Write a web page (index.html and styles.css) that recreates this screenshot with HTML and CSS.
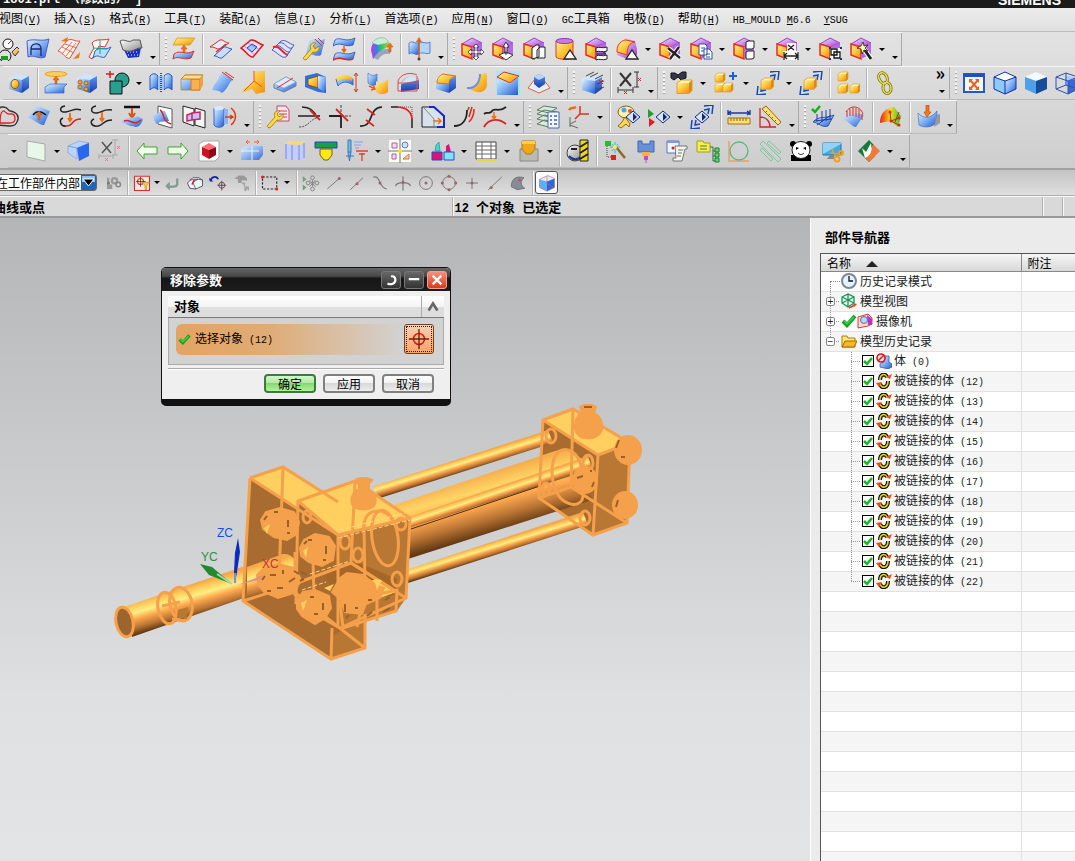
FILE: index.html
```html
<!DOCTYPE html>
<html lang="zh-CN">
<head>
    <meta charset="UTF-8">
    <meta name="viewport" content="width=device-width, initial-scale=1.0">
    <title>移除参数</title>
    <link rel="stylesheet" href="styles.css">
</head>
<body>
    <svg class="sprite" aria-hidden="true">
        <defs>
            <linearGradient id="blue" x1="0" y1="0" x2="1" y2="1"><stop offset="0" stop-color="#e4f1ff"/><stop offset=".5" stop-color="#7fb0f4"/><stop offset="1" stop-color="#2458cc"/></linearGradient>
            <linearGradient id="deep" x1="0" y1="0" x2="0" y2="1"><stop offset="0" stop-color="#5d92ee"/><stop offset="1" stop-color="#173fa8"/></linearGradient>
            <linearGradient id="gold" x1="0" y1="0" x2="1" y2="1"><stop offset="0" stop-color="#fff3a0"/><stop offset=".5" stop-color="#fdc53a"/><stop offset="1" stop-color="#f08a10"/></linearGradient>
            <linearGradient id="violet" x1="0" y1="0" x2="1" y2="1"><stop offset="0" stop-color="#fbeaff"/><stop offset="1" stop-color="#9a3ad0"/></linearGradient>
            <linearGradient id="rainbow" x1="0" y1="0" x2="1" y2="0"><stop offset="0" stop-color="#d030e0"/><stop offset=".3" stop-color="#3080f0"/><stop offset=".6" stop-color="#30d050"/><stop offset="1" stop-color="#f8c020"/></linearGradient>
            <linearGradient id="heat" x1="0" y1="0" x2="1" y2="0"><stop offset="0" stop-color="#e82010"/><stop offset=".5" stop-color="#f8d820"/><stop offset="1" stop-color="#30c030"/></linearGradient>
            <linearGradient id="silver" x1="0" y1="0" x2="1" y2="1"><stop offset="0" stop-color="#fff"/><stop offset="1" stop-color="#888"/></linearGradient>

            <g id="cube"><path d="M2 7 9 3 22 5 15 9Z" fill="#cfe4ff"/><path d="M2 7 15 9V22L2 18Z" fill="url(#blue)"/><path d="M15 9 22 5V17L15 22Z" fill="url(#deep)"/></g>
            <g id="scube"><path d="M2 7 12 1 22 6 12 10Z" fill="url(#violet)" stroke="#a040d0"/><path d="M2 7 12 10V22L2 18Z" fill="url(#gold)" stroke="#f02818" stroke-width="1.5"/><path d="M12 10 22 6V17L12 22Z" fill="#b468e4"/></g>
            <g id="box"><path d="M0 2 3 0H10L8 2Z" fill="#fff6b0"/><path d="M0 2H8V9H0Z" fill="url(#gold)"/><path d="M8 2 10 0V7L8 9Z" fill="#d98a10"/><path d="M0 2 3 0H10V7L8 9H0Z" fill="none" stroke="#d99a20" stroke-width=".6"/></g>
            <g id="up"><path d="M3 0 6 4H4V9H2V4H0Z" fill="#f07018" stroke="#c04808" stroke-width=".5"/></g>
            <g id="wrench"><path d="M2 20 9 12C7 8 10 5 14 6L11 9 13 12 17 9C18 13 15 16 11 15L5 22C3 24 0 22 2 20Z" fill="#ffd940" stroke="#a07808" stroke-width=".8"/></g>
            <g id="wave"><path d="M2 3C7-1 12 6 22 1L20 8C12 11 8 4 0 9Z" fill="url(#blue)" stroke="#2850b0" stroke-width=".8"/></g>
            <g id="diamond"><path d="M7 0 14 6 7 12 0 6Z" fill="#d8e4f8" stroke="#182880"/><path d="M7 2V10L11 6Z" fill="#102878"/></g>
            <g id="outward" fill="none" stroke="#1848b8" stroke-width="1.5"><path d="M14 1 23 0 22 9M14 5 19 4 18 9"/><path d="M10 23 1 24 2 15M10 19 5 20 6 15"/></g>
            <g id="spot" fill="#a86060"><circle r="2"/></g>
        </defs>

        <symbol id="i-sketch" viewBox="0 0 24 24"><circle cx="13" cy="7" r="5" fill="#fff" stroke="#111"/><path d="M13 7 16 4" stroke="#d02020"/><circle cx="10" cy="19" r="6" fill="none" stroke="#111"/><path d="M6 19H13V23H6Z" fill="#18a018"/><path d="M17 15 22 10 25 13 20 19Z" fill="url(#gold)" stroke="#2030a0"/></symbol>
        <symbol id="i-arch" viewBox="0 0 24 24"><path d="M1 4C8 1 15 5 23 2L19 20C13 23 8 17 2 20Z" fill="url(#blue)" stroke="#5060c8"/><path d="M5 18V11C6 6 14 5 15 11V19M5 12H15" fill="none" stroke="#1c2870" stroke-width="1.3"/></symbol>
        <symbol id="i-mesh" viewBox="0 0 24 24"><path d="M1 14 11 3C15 1 18 5 23 4L13 21C9 23 6 15 1 14Z" fill="#fff3ee" stroke="#e05040"/><path d="M5 10 17 16M8 7 20 11M5 17 15 5M9 19 19 6" stroke="#e07060"/><path d="M4 4 11 0 10 5ZM16 22 23 15 22 21Z" fill="#f07818"/></symbol>
        <symbol id="i-cross" viewBox="0 0 24 24"><path d="M4 6C8 1 14 4 21 2L17 10 11 9 4 22 1 20 6 11Z" fill="#fff" stroke="#e03030"/><path d="M7 14C12 9 17 14 23 10L17 20C13 22 10 16 5 21Z" fill="#b8dcff" stroke="#2868c8"/><path d="M5 11 19 12M12 3 12 17" stroke="#18a090"/></symbol>
        <symbol id="i-dotsheet" viewBox="0 0 24 24"><path d="M5 13 22 11 20 20 9 21Z" fill="#1830c8"/><path d="M8 15H20M9 18H20" stroke="#fff" stroke-dasharray="1 2"/><path d="M1 4C6 1 9 7 14 3L21 3 23 11C17 10 14 17 4 13Z" fill="url(#silver)" stroke="#555"/></symbol>
        <symbol id="i-thicken" viewBox="0 0 24 24"><path d="M5 1H23L18 8H1Z" fill="url(#gold)" stroke="#d89828" stroke-width=".8"/><use href="#up" x="9" y="8"/><path d="M2 17C9 12 13 19 22 14L19 21C11 24 7 18 1 22Z" fill="url(#blue)" stroke="#d83030"/></symbol>
        <symbol id="i-strips" viewBox="0 0 24 24"><path d="M1 10 11 3C14 2 16 6 20 6L11 12C8 13 5 9 1 10Z" fill="#e2edff" stroke="#e02828"/><path d="M5 19 15 10C17 9 20 12 23 12L13 21C9 22 8 18 5 19Z" fill="#c8ddff" stroke="#3058c0"/><path d="M7 15 17 7" stroke="#e02828" stroke-width="1.5"/></symbol>
        <symbol id="i-sheet" viewBox="0 0 24 24"><path d="M1 11 11 3C15 2 18 7 23 8L13 20C9 21 6 14 1 11Z" fill="#f6dbe8" stroke="#d81828" stroke-width="1.5"/><path d="M7 11 12 7 17 10 12 15Z" fill="#a8c6ff" stroke="#2040c0"/><path d="M4 9 15 18M8 6 20 13" stroke="#7080d0" stroke-width=".7"/></symbol>
        <symbol id="i-band" viewBox="0 0 24 24"><path d="M1 13 10 4C15 2 18 7 23 8L15 20C11 22 6 15 1 13Z" fill="#dce6ff" stroke="#5058b8"/><path d="M5 9C11 7 13 16 19 15M8 6C14 4 16 13 21 11" fill="none" stroke="#5058b8"/><path d="M2 10C10 8 11 17 17 18" fill="none" stroke="#e02828" stroke-width="2"/></symbol>
        <symbol id="i-surfedit" viewBox="0 0 24 24"><path d="M7 4C12 0 17 5 23 2L19 18C14 21 9 15 4 18Z" fill="url(#blue)"/><path d="M13 2 20 9M16 1 22 7" stroke="#e02828"/><use href="#wrench"/></symbol>
        <symbol id="i-waves" viewBox="0 0 24 24"><use href="#wave"/><path d="M11 9V14M9 12 11 15 13 12" stroke="#e86010" fill="none" stroke-width="1.5"/><use href="#wave" y="14"/><path d="M0 23C8 18 12 25 20 22" fill="none" stroke="#e02828" stroke-width="1.5"/></symbol>
        <symbol id="i-rainbow" viewBox="0 0 24 24"><path d="M1 13C2 0 18-2 20 9L12 13 3 22Z" fill="url(#rainbow)"/><path d="M2 6C8-2 18 0 18 6L8 8Z" fill="#c4f0d8" stroke="#78a890" stroke-width=".6"/><path d="M4 21C8 14 14 11 20 12V17C13 16 10 20 8 23Z" fill="#9ba5b8"/><use href="#up" x="17" y="6"/></symbol>
        <symbol id="i-flag" viewBox="0 0 24 24"><path d="M2 6C6 3 9 8 12 5L12 17C8 19 6 14 2 17Z" fill="url(#blue)" stroke="#2858b8" stroke-width=".7"/><path d="M12 7C15 3 19 8 23 5V16C19 18 16 14 12 17Z" fill="#b6d4f8" stroke="#2858b8" stroke-width=".7"/><path d="M12 3V22" stroke="#e86010" stroke-width="1.5"/><path d="M12 0 15 5H9Z" fill="#e86010"/><circle cx="12" cy="22" r="1.5" fill="#444"/></symbol>
        <symbol id="i-s-move" viewBox="0 0 24 24"><use href="#scube"/><path d="M16 7 19 10H17V14H21V12L24 15 21 18V16H17V20H19L16 23 13 20H15V16H11V18L8 15 11 12V14H15V10H13Z" fill="#fff" stroke="#222" stroke-width=".7"/></symbol>
        <symbol id="i-s-pull" viewBox="0 0 24 24"><use href="#scube"/><path d="M15 5 18 10H16V17H14V10H12ZM8 18 15 15 22 18 15 23Z" fill="#fff" stroke="#222" stroke-width=".9"/></symbol>
        <symbol id="i-s-offset" viewBox="0 0 24 24"><use href="#scube"/><path d="M10 11 14 8H17V20L10 22ZM15 13 18 10H23V21H15Z" fill="#fff" stroke="#222"/></symbol>
        <symbol id="i-s-cyl" viewBox="0 0 24 24"><path d="M3 4V20C6 23 17 23 20 20V4Z" fill="url(#gold)" stroke="#e03820"/><ellipse cx="11.5" cy="4" rx="8.5" ry="2.5" fill="#c080e0" stroke="#9030b0"/><path d="M17 13 23 22H11Z" fill="#fff" stroke="#222" stroke-width="1.3"/></symbol>
        <symbol id="i-s-swap" viewBox="0 0 24 24"><use href="#scube"/><path d="M12 11C15 9 18 12 23 10V14C18 16 15 13 12 15ZM12 19C15 17 18 20 23 18V22C18 24 15 21 12 23Z" fill="#fff" stroke="#222"/><path d="M12 17H22M19 15 22 17" stroke="#222" fill="none"/></symbol>
        <symbol id="i-s-blend" viewBox="0 0 24 24"><path d="M2 8 10 1 20 4 22 12V18L12 22 2 18Z" fill="url(#violet)"/><path d="M2 14C2 6 8 3 11 3L20 5C14 6 12 10 12 18L2 15Z" fill="url(#gold)" stroke="#e83820"/><path d="M17 13 23 22H11Z" fill="#fff" stroke="#222" stroke-width="1.3"/></symbol>
        <symbol id="i-s-delete" viewBox="0 0 24 24"><use href="#scube"/><path d="M10 11 22 21M21 10 12 22" stroke="#fff" stroke-width="4.5"/><path d="M10 11 22 21M21 10 12 22" stroke="#222" stroke-width="2.3"/></symbol>
        <symbol id="i-s-copy" viewBox="0 0 24 24"><use href="#scube"/><path d="M10 7H16L18 9V18H10ZM15 12H20L23 15V22H15Z" fill="#fff" stroke="#3050a0"/><path d="M12 11H16M12 14H15M17 17H21M17 20H21" stroke="#3050a0"/></symbol>
        <symbol id="i-s-pattern" viewBox="0 0 24 24"><use href="#scube"/><path d="M14 5 16 4H22V11L20 12H14V5ZM14 15 16 14H22V21L20 22H14Z" fill="#fff" stroke="#222"/></symbol>
        <symbol id="i-s-dim" viewBox="0 0 24 24"><use href="#scube"/><path d="M8 14H24V23H8ZM12 6H21V14H12Z" fill="#fff"/><path d="M9 15V23M23 15V23M9 19H23M12 16 9 19 12 22M20 16 23 19 20 22M13 8 19 13M19 8 13 13" fill="none" stroke="#222" stroke-width="1.3"/></symbol>
        <symbol id="i-s-group" viewBox="0 0 24 24"><use href="#scube"/><path d="M12 11H23V22H12Z" fill="#fff"/><path d="M13 12H19V18H13ZM16 15H22V21H16Z" fill="none" stroke="#111" stroke-width="1.3"/><path d="M11 10h2v2h-2zM22 10h2v2h-2zM11 21h2v2h-2zM22 21h2v2h-2z" fill="#1830a0"/></symbol>
        <symbol id="i-s-wand" viewBox="0 0 24 24"><use href="#scube"/><path d="M15 12 22 22" stroke="#fff" stroke-width="5"/><path d="M15 12 22 22" stroke="#222" stroke-width="3"/><path d="M14 5 15 9 19 8 16 11 19 14 15 13 13 17 12 12 8 11 12 9Z" fill="#ffffa8" stroke="#222" stroke-width=".8"/></symbol>

        <symbol id="i-hole" viewBox="0 0 24 24"><use href="#cube"/><ellipse cx="8" cy="13" rx="4" ry="4.5" fill="url(#gold)" stroke="#905008"/></symbol>
        <symbol id="i-extrude" viewBox="0 0 24 24"><ellipse cx="12" cy="3" rx="11" ry="2.5" fill="#ffd060" stroke="#f0a020"/><use href="#up" x="9" y="5"/><path d="M1 16 6 13H23L20 16V22H1Z" fill="url(#blue)" stroke="#3868c8" stroke-width=".7"/></symbol>
        <symbol id="i-holes" viewBox="0 0 24 24"><use href="#cube"/><g fill="#f8a030" stroke="#905008" stroke-width=".7"><circle cx="5" cy="11" r="2"/><circle cx="11" cy="12" r="2"/><circle cx="5" cy="16" r="2"/><circle cx="11" cy="18" r="2"/></g></symbol>
        <symbol id="i-unite" viewBox="0 0 24 24"><circle cx="16" cy="9" r="7" fill="#28a090" stroke="#111"/><path d="M4 10H16V23H4Z" fill="#28a090" stroke="#111"/><path d="M4 0V7M0 3H8" stroke="#e01818" stroke-width="1.5"/></symbol>
        <symbol id="i-mirror" viewBox="0 0 24 24"><path d="M1 5C4 2 6 2 9 5V19C6 16 4 16 1 19Z" fill="url(#blue)" stroke="#2858b8"/><path d="M15 5C18 2 20 2 23 5V19C20 16 18 16 15 19Z" fill="url(#blue)" stroke="#2858b8"/><path d="M9 5H15V19H9Z" fill="#9cc2f4"/><path d="M12 2V22" stroke="#e01818" stroke-width="2" stroke-dasharray="1 1"/></symbol>
        <symbol id="i-split" viewBox="0 0 24 24"><path d="M1 8 5 4H23L20 8V19H1Z" fill="url(#blue)" stroke="#b08020" stroke-width=".7"/><path d="M11 8H20V19H11Z" fill="#f8b050" stroke="#e07818"/><path d="M1 8 5 4H23L20 8Z" fill="#ffdd90" stroke="#d08018"/><path d="M20 8 23 4V14L20 19Z" fill="#f0a040"/></symbol>
        <symbol id="i-trim" viewBox="0 0 24 24"><path d="M3 14C9 8 7 3 12 2L22 9C18 10 18 17 11 22 8 19 5 20 1 19Z" fill="url(#blue)"/><path d="M11 1 22 9M14 1 23 7" stroke="#e02828"/></symbol>
        <symbol id="i-boot" viewBox="0 0 24 24"><path d="M12 0H23V21L14 23 10 18 0 22C2 14 10 15 12 9Z" fill="url(#gold)"/><path d="M12 0V10L2 20M12 10 20 16" fill="none" stroke="#e85818"/></symbol>
        <symbol id="i-slab" viewBox="0 0 24 24"><path d="M1 13 13 6 23 11V15L11 21 1 17Z" fill="url(#blue)" stroke="#7080a0"/><path d="M1 13 13 6 23 11 11 17Z" fill="#dcebff" stroke="#8aa0c8" stroke-width=".6"/><path d="M4 17 20 7" stroke="#e02828"/></symbol>
        <symbol id="i-shell" viewBox="0 0 24 24"><path d="M1 5 13 2 22 6V22L14 21 1 16Z" fill="#3470d8"/><path d="M4 8 14 5V17L4 14Z" fill="url(#gold)" stroke="#805018"/><path d="M14 5 22 6V22L14 17Z" fill="url(#blue)"/></symbol>
        <symbol id="i-bend" viewBox="0 0 24 24"><path d="M1 8C6 4 12 4 18 8V14C12 10 7 10 3 15Z" fill="url(#blue)" stroke="#3070c8"/><path d="M1 7C7 2 12 3 18 7L17 10C11 7 7 7 3 11Z" fill="url(#gold)"/><path d="M21 2V21M19 5 21 2 23 5M19 18 21 21 23 18" stroke="#e03018" fill="none"/></symbol>
        <symbol id="i-fold" viewBox="0 0 24 24"><path d="M2 2C5 5 8 5 11 3V13C8 15 5 15 2 12Z" fill="url(#blue)" stroke="#3070c8" stroke-width=".6"/><path d="M10 10C13 13 18 13 22 8V21C18 24 13 24 10 21Z" fill="url(#gold)"/><path d="M3 15 9 18M7 14 9 18 5 19" stroke="#f06010" fill="none" stroke-width="1.5"/></symbol>
        <symbol id="i-dome" viewBox="0 0 24 24"><path d="M4 15C5 6 13 4 22 8V18L4 21Z" fill="url(#deep)"/><path d="M4 13 22 9 20 7C13 4 7 7 4 13Z" fill="#d0e6ff"/><path d="M1 20V10C4 2 14 1 20 4M1 20H20V5M1 12H20" fill="none" stroke="#e04848"/></symbol>
        <symbol id="i-blend" viewBox="0 0 24 24"><use href="#cube"/><path d="M3 12C3 7 5 5 9 3L22 5C16 7 15 9 15 13Z" fill="url(#gold)" stroke="#d07818"/></symbol>
        <symbol id="i-chute" viewBox="0 0 24 24"><path d="M15 3 22 2V14C21 21 14 23 9 20L2 18C10 18 15 14 15 3Z" fill="url(#gold)"/><path d="M2 17C10 18 15 12 15 3" fill="none" stroke="#7090d8" stroke-width="2"/></symbol>
        <symbol id="i-chamfer" viewBox="0 0 24 24"><path d="M0 0H24V24H0Z" fill="#a8e4f8"/><path d="M1 9 14 13V24H1ZM14 13 22 6V24H14Z" fill="url(#blue)"/><path d="M1 6 8 1 23 5 14 12Z" fill="url(#gold)" stroke="#e02828"/></symbol>
        <symbol id="i-draft" viewBox="0 0 24 24"><path d="M1 17 12 3 23 17 12 22Z" fill="#e4efff" stroke="#e06030"/><path d="M7 6 12 3 18 6V13L12 17 7 13Z" fill="url(#deep)"/><path d="M7 6 12 3 18 6 12 9Z" fill="#b8d6ff"/></symbol>
        <symbol id="i-cubes-x" viewBox="0 0 24 24"><use href="#cube" y="1"/><path d="M6 5 14 1M10 6 18 2M15 8 23 4M17 13 24 10M17 19 24 16" stroke="#444"/><path d="M19 9 23 13M23 9 19 13" stroke="#d02020"/></symbol>
        <symbol id="i-measure-x" viewBox="0 0 24 24"><path d="M3 2 14 15M14 2 3 15" stroke="#333" stroke-width="2"/><path d="M17 1H22M17 16H22M20 1V16M1 16V22M16 16V22M1 19H16" stroke="#333"/><path d="M21 7 24 10M24 7 21 10M7 20 10 23M10 20 7 23" stroke="#e02020"/></symbol>
        <symbol id="i-find" viewBox="0 0 24 24"><path d="M1 2H5L8 4 12 1H16V7L11 9 8 6 4 9 1 7Z" fill="#303848" stroke="#111"/><use href="#box" transform="translate(7 9) scale(1.5)"/></symbol>
        <symbol id="i-addcomp" viewBox="0 0 24 24"><use href="#box" x="2" y="2"/><use href="#box" x="2" y="12"/><use href="#box" x="10" y="12"/><path d="M20 1V9M16 5H24" stroke="#1860d8" stroke-width="2"/></symbol>
        <symbol id="i-movecomp" viewBox="0 0 24 24"><use href="#outward"/><use href="#box" transform="translate(5 7) scale(1.25)"/></symbol>
        <symbol id="i-three" viewBox="0 0 24 24"><use href="#box" x="2" y="1"/><use href="#box" x="2" y="13"/><use href="#box" x="14" y="13"/></symbol>
        <symbol id="i-chain" viewBox="0 0 24 24"><g fill="none" stroke="#777010" stroke-width="3"><ellipse cx="10" cy="7" rx="4" ry="5.5" transform="rotate(-25 10 7)"/><ellipse cx="14" cy="17" rx="4" ry="5.5" transform="rotate(-5 14 17)"/></g><g fill="none" stroke="#f0e050" stroke-width="1.5"><ellipse cx="10" cy="7" rx="4" ry="5.5" transform="rotate(-25 10 7)"/><ellipse cx="14" cy="17" rx="4" ry="5.5" transform="rotate(-5 14 17)"/></g></symbol>
        <symbol id="i-fit" viewBox="0 0 24 24"><path d="M2 3H22V21H2Z" fill="#f2f6ff" stroke="#2858b8" stroke-width="2"/><path d="M2 3H22V6H2Z" fill="#2050c0"/><path d="M8 9 16 18M16 9 8 18" stroke="#f06018" stroke-width="2"/><path d="M7 8H11L7 12ZM17 8V12L13 8ZM17 19H13L17 15ZM7 19V15L11 19Z" fill="#f06018"/></symbol>
        <symbol id="i-shade-edge" viewBox="0 0 24 24"><path d="M1 6 12 1 23 6 12 10Z" fill="#fff"/><path d="M1 6 12 10V23L1 18Z" fill="#8ccaff"/><path d="M12 10 23 6V18L12 23Z" fill="url(#blue)"/><path d="M1 6 12 1 23 6V18L12 23 1 18ZM1 6 12 10 23 6M12 10V23" fill="none" stroke="#1030a0"/></symbol>
        <symbol id="i-shade" viewBox="0 0 24 24"><path d="M1 6 12 1 23 6 12 10Z" fill="#f4faff"/><path d="M1 6 12 10V23L1 18Z" fill="#50a0e8"/><path d="M12 10 23 6V18L12 23Z" fill="#174c98"/></symbol>
        <symbol id="i-wire" viewBox="0 0 24 24"><path d="M10 4 22 7V17L10 15Z" fill="#a8ceff"/><path d="M13 10 23 7V18L13 23Z" fill="#3868d8"/><path d="M1 6 11 2 23 6V18L13 23 1 18ZM1 6 13 10 23 6M13 10V23M11 2V14L1 18M11 14 23 18" fill="none" stroke="#3050b0"/></symbol>

        <symbol id="i-clover" viewBox="0 0 24 24"><path d="M1 20C1 10 0 3 6 2S12 6 14 6 23 8 22 14 18 21 14 21Z" fill="none" stroke="#333" stroke-width="1.5"/><path d="M4 18C4 10 5 7 7 6S10 10 14 9 19 11 19 14 16 18 13 18Z" fill="none" stroke="#e02020" stroke-width="1.3"/></symbol>
        <symbol id="i-projsurf" viewBox="0 0 24 24"><path d="M1 13 9 2C14 1 19 5 23 6L17 20C13 21 7 14 1 13Z" fill="url(#blue)"/><path d="M6 10C10 5 14 6 19 10" fill="none" stroke="#111" stroke-width="1.5"/><use href="#up" x="9" y="6"/></symbol>
        <symbol id="i-bridge" viewBox="0 0 24 24"><path d="M7 1C1 2 1 8 8 7 17 5 16 3 23 5M5 13C0 15 3 22 8 21" fill="none" stroke="#222" stroke-width="1.5"/><path d="M8 21C17 21 12 14 23 14" fill="none" stroke="#e02020" stroke-width="1.5"/><path d="M12 8V15M10 13 12 16 14 13" stroke="#f07010" fill="none" stroke-width="2"/></symbol>
        <symbol id="i-offcurve" viewBox="0 0 24 24"><path d="M7 1C1 2 1 9 8 8 14 7 14 4 23 5M5 14C0 16 2 22 9 21 15 20 14 15 23 15" fill="none" stroke="#222" stroke-width="1.5"/><path d="M13 7V15M11 13 13 16 15 13" stroke="#f07010" fill="none" stroke-width="2"/></symbol>
        <symbol id="i-project" viewBox="0 0 24 24"><path d="M4 2H20" stroke="#111" stroke-width="2.5"/><path d="M12 3V12M9 8 12 13 15 8" stroke="#e05010" fill="none" stroke-width="2"/><path d="M1 18C5 9 12 15 17 11L23 14C21 22 16 23 13 21 8 22 6 17 1 18Z" fill="url(#blue)"/><path d="M4 16C10 13 13 22 21 15" fill="none" stroke="#e02020" stroke-width="1.5"/></symbol>
        <symbol id="i-intersect" viewBox="0 0 24 24"><path d="M7 1 21 4V23L7 19Z" fill="#fff" stroke="#555"/><path d="M1 9C7 11 7 5 14 6L18 16C12 17 9 16 5 19Z" fill="url(#blue)"/><path d="M9 5C14 7 10 16 20 19" fill="none" stroke="#e02020" stroke-width="1.5"/></symbol>
        <symbol id="i-section" viewBox="0 0 24 24"><path d="M1 1 12 4V21L1 17ZM13 3 23 6V23L13 20Z" fill="#f1f8f1" stroke="#222"/><path d="M5 10 10 8V15L5 16ZM10 8 18 7V14L10 15Z" fill="#b8c8ff" stroke="#d02060" stroke-width="1.5"/></symbol>
        <symbol id="i-wrap" viewBox="0 0 24 24"><path d="M1 3V20C3 23 9 23 11 20V3Z" fill="url(#blue)" stroke="#3068c8"/><ellipse cx="6" cy="3" rx="5" ry="2" fill="#d8e8ff"/><path d="M11 4H15V19H11" fill="#8ab4ee"/><path d="M18 3C24 8 24 15 18 20M12 12H19M17 10 20 12 17 14" fill="none" stroke="#e03818" stroke-width="1.5"/></symbol>
        <symbol id="i-editparam" viewBox="0 0 24 24"><path d="M11 1H20L23 5V16H11Z" fill="#ffe8ee" stroke="#c04868"/><path d="M13 6H21M13 9H21M13 12H21" stroke="#e03058"/><use href="#wrench"/></symbol>
        <symbol id="i-trimcurve" viewBox="0 0 24 24"><path d="M1 11H23M5 2C14 2 18 7 20 13" fill="none" stroke="#222" stroke-width="1.6"/><path d="M2 22C12 22 13 14 20 13" fill="none" stroke="#555" stroke-dasharray="2 1"/><path d="M13 5 23 15" stroke="#e02020" stroke-width="1.8"/></symbol>
        <symbol id="i-corner" viewBox="0 0 24 24"><path d="M1 11H13V23" fill="none" stroke="#222" stroke-width="1.8"/><path d="M13 11V0M13 11H23" stroke="#444" stroke-dasharray="3 1"/><path d="M8 4 20 16" stroke="#e02020" stroke-width="1.8"/></symbol>
        <symbol id="i-divide" viewBox="0 0 24 24"><path d="M1 21C16 22 8 3 23 2" fill="none" stroke="#222" stroke-width="1.7"/><path d="M8 4 16 10M7 15 15 21" stroke="#e02020" stroke-width="1.6"/></symbol>
        <symbol id="i-fillet" viewBox="0 0 24 24"><path d="M1 2H8M22 13V23" fill="none" stroke="#222" stroke-width="1.5"/><path d="M10 2H22V12" fill="none" stroke="#555" stroke-dasharray="1 1"/><path d="M8 2C19 3 22 8 22 15" fill="none" stroke="#e02020" stroke-width="1.7"/></symbol>
        <symbol id="i-stretch" viewBox="0 0 24 24"><path d="M1 2H13L23 11V22H1Z" fill="#d7e2ee" stroke="#222"/><path d="M8 2H13L23 11V22H16" fill="none" stroke="#1828c8" stroke-width="2"/><path d="M3 3 13 14V21" fill="none" stroke="#888"/><path d="M12 16H20M17 13 20 16 17 19" fill="none" stroke="#f07010" stroke-width="1.5"/></symbol>
        <symbol id="i-arclen" viewBox="0 0 24 24"><path d="M2 21C11 21 15 14 15 5" fill="none" stroke="#222" stroke-width="1.8"/><path d="M17 2 16 5M22 4C22 10 20 14 17 17M20 2 17 12" fill="none" stroke="#e03020" stroke-width="1.6"/></symbol>
        <symbol id="i-smooth" viewBox="0 0 24 24"><path d="M1 9C4 6 7 10 9 6S16 8 23 2" fill="none" stroke="#222" stroke-width="1.8"/><path d="M1 22C6 13 16 13 23 19" fill="none" stroke="#e02020" stroke-width="1.8"/><path d="M11 7V13M9 11 11 14 13 11" stroke="#f07010" fill="none" stroke-width="1.5"/></symbol>
        <symbol id="i-layers" viewBox="0 0 24 24"><path d="M1 19 8 15 21 17 13 22ZM1 14 8 10 21 12 13 17ZM1 9 8 5 21 7 13 12ZM1 5 8 1 21 3 13 8Z" fill="#dceadc" stroke="#588068"/><path d="M12 7H23V23H12Z" fill="#f4f8ff" stroke="#4868b0"/><path d="M14 11H16M18 11H21M14 15H16M18 15H21M14 19H16M18 19H21" stroke="#3860c0" stroke-width="1.5"/></symbol>
        <symbol id="i-wcs" viewBox="0 0 24 24"><path d="M13 9V1M13 9 22 9M13 9 8 14" stroke="#e03020" stroke-width="1.5"/><path d="M2 5C4 2 6 4 9 2" stroke="#f06818" stroke-width="2.5" fill="none"/><path d="M3 22V12M3 20 11 23M3 19 9 16" stroke="#666"/></symbol>
        <symbol id="i-person" viewBox="0 0 24 24"><ellipse cx="10" cy="7" rx="8" ry="6" fill="#fff0b0" stroke="#806020"/><circle cx="8" cy="5" r="2.5" fill="#48a8f0"/><circle cx="14" cy="6" r="2" fill="#e85030"/><path d="M9 12 6 17 2 21 5 23 10 19 13 22 14 19 12 16Z" fill="#ffd850" stroke="#906810"/><use href="#diamond" x="10" y="6"/></symbol>
        <symbol id="i-play" viewBox="0 0 24 24"><path d="M1 4 7 9 1 13Z" fill="#20a030"/><path d="M2 13 8 17 2 22Z" fill="#d82020"/><use href="#diamond" x="9" y="6"/></symbol>
        <symbol id="i-explode" viewBox="0 0 24 24"><use href="#outward"/><use href="#diamond" x="5" y="6"/></symbol>
        <symbol id="i-ruler" viewBox="0 0 24 24"><path d="M1 13H23V19H1Z" fill="#ffe070" stroke="#a07018"/><path d="M4 13v3M7 13v3M10 13v3M13 13v3M16 13v3M19 13v3" stroke="#806010"/><path d="M1 5V10M23 5V10M1 8H23M4 6 1 8 4 10M20 6 23 8 20 10" fill="none" stroke="#1838a0" stroke-width="1.3"/></symbol>
        <symbol id="i-angle" viewBox="0 0 24 24"><path d="M2 3V22H18M2 12C8 12 12 16 12 22" fill="none" stroke="#c82828" stroke-width="1.3"/><path d="M4 4 8 1 23 17 20 20Z" fill="#ffe070" stroke="#906818"/><path d="M9 6 7 8M12 9 10 11M15 12 13 14M18 15 16 17" stroke="#806010"/></symbol>
        <symbol id="i-check-surf" viewBox="0 0 24 24"><path d="M2 17C8 10 15 14 23 10L17 21C11 23 8 18 2 17Z" fill="url(#blue)" stroke="#3858a0"/><path d="M6 17V9M11 17V6M15 16V5M19 14V4M3 16 21 14M6 20 20 10" stroke="#2040a0"/><path d="M1 4 4 7 9 1" fill="none" stroke="#18b018" stroke-width="2.5"/></symbol>
        <symbol id="i-comb" viewBox="0 0 24 24"><path d="M1 14C5 8 12 7 22 10L14 22C10 22 5 15 1 14Z" fill="url(#blue)"/><path d="M5 12V6M8 11V4M11 11V2M14 12V3M17 13V4M20 15V9M4 7C8 0 18 0 21 9" fill="none" stroke="#e02828"/></symbol>
        <symbol id="i-heat" viewBox="0 0 24 24"><path d="M1 18C1 7 8 3 15 2L22 11 19 22 11 16Z" fill="url(#heat)"/><path d="M11 7 12 16 20 20M12 16 20 13M16 17 20 7" fill="none" stroke="#903818"/><g fill="#f02010"><circle cx="11" cy="7" r="1.5"/><circle cx="12" cy="16" r="1.5"/><circle cx="20" cy="20" r="1.5"/><circle cx="20" cy="13" r="1.5"/></g></symbol>
        <symbol id="i-press" viewBox="0 0 24 24"><path d="M2 8C7 14 15 14 21 6V17C16 23 8 23 3 20Z" fill="url(#blue)" stroke="#3868b8" stroke-width=".6"/><path d="M21 10 24 9V18L18 22Z" fill="#999"/><path d="M10 0H13V7H15L11 12 8 7H10Z" fill="#f07818" stroke="#b84010" stroke-width=".6"/></symbol>

        <symbol id="i-plane" viewBox="0 0 24 24"><path d="M3 2 21 5V22L3 18Z" fill="#e8f8e8" stroke="#a4aaa4"/></symbol>
        <symbol id="i-boxwire" viewBox="0 0 24 24"><path d="M1 7 12 2 22 4 10 9ZM1 7 10 9V20L1 14Z" fill="#b9d5ff" stroke="#7898d0" stroke-width=".6"/><path d="M10 9 22 4V17L12 22Z" fill="#2868f0"/></symbol>
        <symbol id="i-graydim" viewBox="0 0 24 24"><path d="M4 3 13 14M14 3 4 14" stroke="#555" stroke-width="1.5"/><path d="M17 1V16M14 1H20M15 16H20M1 15V20M15 15V20M1 17H15" stroke="#a8a8a8"/><path d="M19 7 22 10M22 7 19 10M7 19 10 22M10 19 7 22" stroke="#e08080"/></symbol>
        <symbol id="i-left" viewBox="0 0 24 24"><path d="M2 12 9 4V8H22V15H9V20Z" fill="#efffe8" stroke="#40a030"/></symbol>
        <symbol id="i-right" viewBox="0 0 24 24"><path d="M22 12 15 4V8H2V15H15V20Z" fill="#efffe8" stroke="#40a030"/></symbol>
        <symbol id="i-red" viewBox="0 0 24 24"><path d="M2 5 7 2H22V18L18 22H2Z" fill="#fff" stroke="#aaa"/><path d="M5 8 12 4 19 8 12 11Z" fill="#ff7070"/><path d="M5 8 12 11V20L5 16Z" fill="#d01020"/><path d="M12 11 19 8V16L12 20Z" fill="#8c0818"/></symbol>
        <symbol id="i-bluecut" viewBox="0 0 24 24"><path d="M1 10 6 7H23V16L19 21H1Z" fill="url(#blue)" opacity=".85"/><path d="M12 7V21M1 12H19" stroke="#e4f4ff"/><path d="M6 3H10M8 1 6 3 8 5M14 3H19M17 1 19 3 17 5" stroke="#f06030" fill="none"/></symbol>
        <symbol id="i-tank" viewBox="0 0 24 24"><path d="M2 5H22V20H2Z" fill="#c2ceff"/><path d="M2 5 7 2H22L17 6Z" fill="#ffd870"/><path d="M3 5V20M9 6V21M16 6V21M21 4V19" stroke="#7884e0"/></symbol>
        <symbol id="i-funnel" viewBox="0 0 24 24"><path d="M1 3H23V9H1Z" fill="#18a048" stroke="#2040c0"/><path d="M6 10H18V16L14 21H10L6 16Z" fill="#ffe818" stroke="#776010"/></symbol>
        <symbol id="i-text" viewBox="0 0 24 24"><path d="M3 1H6V13H3ZM3 13 4.5 22 6 13M1 17H9" fill="#78b8e8" stroke="#3878c0"/><path d="M9 3H18M9 6H16M10 9H14" stroke="#78a8e0"/><path d="M11 12H23M17 14V22M14 15H20" stroke="#e04030" stroke-width="1.3"/></symbol>
        <symbol id="i-quad" viewBox="0 0 24 24"><path d="M1 1H23V23H1Z" fill="#fbfbf4"/><path d="M12 0V24M0 12H24" stroke="#777"/><path d="M4 4H9V9H4ZM4 15H8V20H4Z" fill="#f0d8f0" stroke="#b060a0"/><circle cx="17" cy="6" r="3" fill="#d0e0ff" stroke="#5880c0"/><path d="M15 20H21V15Z" fill="#ffc8b0" stroke="#d07050"/><circle cx="12" cy="12" r="2" fill="#f0e820"/></symbol>
        <symbol id="i-lipstick" viewBox="0 0 24 24"><path d="M4 12 5 6 8 3 9 12Z" fill="#40d8d0" stroke="#188888" stroke-width=".6"/><path d="M1 13H11V21H1ZM15 13V7L18 5 20 13Z" fill="#e01078"/><path d="M13 13H23V21H13Z" fill="#80e4ff" stroke="#2050c0"/><path d="M1 13H11V21H1Z" fill="none" stroke="#2050c0"/></symbol>
        <symbol id="i-grid" viewBox="0 0 24 24"><path d="M2 3H22V20H2Z" fill="#fff" stroke="#444"/><path d="M2 7H22M2 11H22M2 15H22M8 3V20M17 3V20" stroke="#666"/><path d="M3 21H22" stroke="#e8d840" stroke-width="2"/></symbol>
        <symbol id="i-pocket" viewBox="0 0 24 24"><path d="M3 10H21V22H3Z" fill="#b8bcb0" stroke="#888"/><path d="M5 2H18V10L14 15H9L5 10Z" fill="#f0a818" stroke="#b07810"/><path d="M5 2H18V5H5Z" fill="#ffd040"/></symbol>
        <symbol id="i-drill" viewBox="0 0 24 24"><circle cx="9" cy="14" r="8" fill="url(#silver)" stroke="#444"/><path d="M3 17C8 23 15 20 17 14" stroke="#1838a0" fill="none" stroke-width="2"/><path d="M14 1H22V22H14Z" fill="#f0d818" stroke="#222"/><path d="M14 8 22 3M14 14 22 9M14 20 22 15" stroke="#222" stroke-width="2"/><path d="M5 10H11" stroke="#222" stroke-width="2"/></symbol>
        <symbol id="i-magic" viewBox="0 0 24 24"><path d="M2 2H8V7H2Z" fill="#20c030"/><path d="M8 16H13V21H8Z" fill="#e02020"/><path d="M4 7V18H8" fill="none" stroke="#444" stroke-dasharray="1 1"/><path d="M13 8 22 19" stroke="#906820" stroke-width="2.5"/><path d="M12 3V14M7 8H17M9 5 15 12M15 5 9 12" stroke="#40b8d0"/><circle cx="12" cy="8" r="2" fill="#fff040"/></symbol>
        <symbol id="i-plug" viewBox="0 0 24 24"><path d="M4 2H8V5H16V2H20V13H4Z" fill="#6890d8" stroke="#4068b0"/><path d="M8 13H16V17H8Z" fill="#ffb040"/><path d="M10 17H14V21H12.5V24H11.5V21H10Z" fill="#c050b0"/></symbol>
        <symbol id="i-script" viewBox="0 0 24 24"><path d="M2 2H14V14H2Z" fill="#f0f6ff" stroke="#5878c0"/><path d="M2 2H14V4H2Z" fill="#8098e0"/><circle cx="8" cy="9" r="1.5" fill="#e02020"/><path d="M10 7H22V10H20L17 22H8V19H11Z" fill="#f4f4ea" stroke="#777"/><path d="M13 11H18M13 14H17M12 17H16" stroke="#777"/></symbol>
        <symbol id="i-tree" viewBox="0 0 24 24"><path d="M1 2H7L8 4H14V13H1Z" fill="#f8ec50" stroke="#a0a020"/><path d="M4 7H11M4 10H11" stroke="#488828"/><path d="M14 8H17V22H19M17 12H19M17 17H19" fill="none" stroke="#207830"/><path d="M19 9h4v4h-4zM19 14h4v4h-4zM19 19h4v4h-4z" fill="#68d078" stroke="#188030"/></symbol>
        <symbol id="i-circle" viewBox="0 0 24 24"><path d="M2 2V22H22" fill="none" stroke="#f0a060" stroke-width="1.5"/><circle cx="12" cy="12" r="9" fill="none" stroke="#58b880" stroke-width="1.3"/></symbol>
        <symbol id="i-hatch" viewBox="0 0 24 24"><path d="M2 5 5 2 23 20 20 23ZM9 4 11 2 23 13 21 15ZM2 11 4 9 15 20 13 22Z" fill="none" stroke="#78c898"/></symbol>
        <symbol id="i-panda" viewBox="0 0 24 24"><circle cx="4" cy="5" r="3"/><circle cx="20" cy="5" r="3"/><path d="M2 22V16H22V22Z"/><ellipse cx="12" cy="11" rx="9" ry="8.5" fill="#fff" stroke="#222"/><path d="M7 8 10 9 7 11ZM17 8 14 9 17 11Z"/><path d="M9 14C11 16 13 16 15 14" fill="none" stroke="#222"/></symbol>
        <symbol id="i-snip" viewBox="0 0 24 24"><path d="M3 4H21V16H3Z" fill="#48a8e0" stroke="#1878b8"/><path d="M10 16H14V20H7" fill="#888"/><path d="M3 15 21 5V4H3Z" fill="#90d4f8"/><circle cx="17" cy="20" r="2.5" fill="none" stroke="#f0a020" stroke-width="2"/><circle cx="21" cy="14" r="2" fill="none" stroke="#f0a020" stroke-width="2"/><path d="M16 18 12 10M19 15 10 14" stroke="#e8a030" stroke-width="1.5"/></symbol>
        <symbol id="i-ysug" viewBox="0 0 24 24"><path d="M1 12 12 1 17 6 12 11 18 17 12 23Z" fill="#187838"/><path d="M16 5 23 12 12 23 7 17 12 17Z" fill="#f07838"/><path d="M5 9 9 13 14 4C15 11 15 16 8 19" fill="#fff"/></symbol>

        <symbol id="i-gears" viewBox="0 0 24 24"><path d="M4 5V20H11V14H7V5Z" fill="#999"/><circle cx="14" cy="9" r="3.5" fill="none" stroke="#999" stroke-width="3"/><circle cx="19" cy="14" r="3" fill="none" stroke="#888" stroke-width="2"/><circle cx="6" cy="12" r="2" fill="#777"/></symbol>
        <symbol id="i-selfilter" viewBox="0 0 24 24"><path d="M2 3H22V22H2Z" fill="#fbe8e0" stroke="#d83030" stroke-width="1.5"/><circle cx="10" cy="10" r="4" fill="none" stroke="#d83030" stroke-width="1.5"/><path d="M10 4V17M4 10H17" stroke="#333"/><path d="M11 11H22L18 15V21H16V15Z" fill="#f8c830" stroke="#987010" stroke-width=".6"/></symbol>
        <symbol id="i-return" viewBox="0 0 24 24"><path d="M19 6V13C19 17 15 17 8 17" fill="none" stroke="#819b94" stroke-width="3"/><path d="M9 10V22L3 16Z" fill="#819b94"/></symbol>
        <symbol id="i-cubesel" viewBox="0 0 24 24"><path d="M2 12 9 5H17L22 8V16L13 20 5 19Z" fill="#eef4ff" stroke="#333"/><path d="M9 11 16 7 22 8M9 11 13 20M5 8 16 7" fill="none" stroke="#444"/><path d="M11 8 8 14" stroke="#d02020" stroke-width="2"/></symbol>
        <symbol id="i-undo" viewBox="0 0 24 24"><path d="M2 8C5 2 11 3 12 7" fill="none" stroke="#1828a0" stroke-width="2.5"/><path d="M0 5 6 10H1Z" fill="#1828a0"/><circle cx="17" cy="15" r="4" fill="none" stroke="#702828"/><path d="M17 9V22M11 15H23" stroke="#333"/></symbol>
        <symbol id="i-hammer" viewBox="0 0 24 24"><path d="M3 6 9 2H16L20 6V9L14 8 12 12H8V7Z" fill="#999"/><path d="M13 12H17V22H19V17H22V22" fill="#aaa" stroke="#999"/></symbol>
        <symbol id="i-rect" viewBox="0 0 24 24"><path d="M2 4H21V20H2Z" fill="none" stroke="#222" stroke-width="1.5" stroke-dasharray="3 2"/><circle cx="2" cy="4" r="2" fill="#e02020"/><circle cx="21" cy="20" r="2" fill="#e02020"/></symbol>
        <symbol id="i-snap" viewBox="0 0 24 24"><path d="M1 3 6 7 1 11ZM1 14 6 18 1 22Z" fill="#7a9a82"/><g fill="none" stroke="#888" stroke-width="1.3"><circle cx="14" cy="5" r="2.5"/><circle cx="14" cy="20" r="2.5"/><circle cx="8" cy="12" r="2.5"/><circle cx="20" cy="12" r="2.5"/><path d="M14 8V17M11 12H17M10 8 18 17M18 8 10 17"/></g></symbol>
        <symbol id="i-p-line" viewBox="0 0 24 24"><path d="M3 20 20 5" stroke="#777" stroke-width="1.3"/><use href="#spot" x="19" y="6"/></symbol>
        <symbol id="i-p-mid" viewBox="0 0 24 24"><path d="M3 21 20 5" stroke="#777" stroke-width="1.3"/><use href="#spot" x="12" y="13"/></symbol>
        <symbol id="i-p-curve" viewBox="0 0 24 24"><path d="M3 4C14 2 9 18 21 20" fill="none" stroke="#777" stroke-width="1.5"/><use href="#spot" x="12" y="12"/></symbol>
        <symbol id="i-p-cross" viewBox="0 0 24 24"><path d="M2 16C4 10 20 10 22 16M12 3V22" fill="none" stroke="#777" stroke-width="1.5"/><use href="#spot" x="12" y="11"/></symbol>
        <symbol id="i-p-center" viewBox="0 0 24 24"><circle cx="12" cy="12" r="8.5" fill="none" stroke="#777" stroke-width="1.3"/><use href="#spot" x="12" y="12"/></symbol>
        <symbol id="i-p-quad" viewBox="0 0 24 24"><circle cx="12" cy="12" r="8.5" fill="none" stroke="#777" stroke-width="1.3"/><use href="#spot" x="12" y="3"/><use href="#spot" x="12" y="21"/><use href="#spot" x="3" y="12"/><use href="#spot" x="21" y="12"/></symbol>
        <symbol id="i-p-point" viewBox="0 0 24 24"><path d="M12 5V20M4 12H20" stroke="#777" stroke-width="1.3"/><use href="#spot" x="12" y="12"/></symbol>
        <symbol id="i-p-on" viewBox="0 0 24 24"><path d="M3 21 21 4" stroke="#777" stroke-width="1.3"/><use href="#spot" x="7" y="18"/></symbol>
        <symbol id="i-p-face" viewBox="0 0 24 24"><path d="M3 17C3 6 10 2 20 5 15 9 15 15 21 19L11 21Z" fill="#888c98" stroke="#666"/><use href="#spot" x="14" y="8"/></symbol>
        <symbol id="i-p-cube" viewBox="0 0 24 24"><path d="M2 7 13 2 22 6 12 10Z" fill="#d8f0ff"/><path d="M2 7 12 10V23L2 18Z" fill="#58b0f8"/><path d="M12 10 22 6V18L12 23Z" fill="#2868d8"/><path d="M2 7 13 2 22 6V18L12 23 2 18ZM12 3V13L21 18" fill="none" stroke="#e05060" stroke-width=".8"/></symbol>

        <symbol id="i-clock" viewBox="0 0 16 16"><circle cx="8" cy="8" r="7" fill="#e7f2ff" stroke="#7d8696" stroke-width="2"/><path d="M8 3V8H12" fill="none" stroke="#111" stroke-width="1.3"/></symbol>
        <symbol id="i-modelview" viewBox="0 0 16 16"><path d="M1 4 7 1 13 4V10L7 14 1 10ZM1 4 7 7 13 4M7 1V14M1 10 7 7 13 10" fill="none" stroke="#109858" stroke-width="1.3"/><path d="M8 15 14 12" stroke="#f04020" stroke-width="1.5"/><path d="M12 10 16 11 13 14Z" fill="#f04020"/></symbol>
        <symbol id="i-camera" viewBox="0 0 16 16"><path d="M1 4 11 1 15 5V11L11 13 1 15Z" fill="#ffd8d8" stroke="#e03830"/><path d="M10 2 15 6V12L11 12Z" fill="#c030c8"/><circle cx="7" cy="7" r="3.5" fill="#bcd8f0" stroke="#5070a0"/></symbol>
        <symbol id="i-folder" viewBox="0 0 16 16"><path d="M1 3H6L7 5H14V14H1Z" fill="#ffe878" stroke="#b07808"/><path d="M4 8H16L13 14H1Z" fill="#f8b820" stroke="#a06808"/></symbol>
        <symbol id="i-body" viewBox="0 0 16 16"><path d="M4 11 7 9H8V3H13V9L16 11V14L12 16 4 14Z" fill="url(#blue)" stroke="#3058c0" stroke-width=".8"/><circle cx="5" cy="5" r="4" fill="#ffdede" stroke="#d81818" stroke-width="1.6"/><path d="M2 8 8 2" stroke="#d81818" stroke-width="1.5"/></symbol>
        <symbol id="i-link" viewBox="0 0 16 16"><path d="M4 7C4 1 9 0 11 4M12 8C12 15 6 16 4 11" fill="none" stroke="#111" stroke-width="4"/><path d="M4 7C4 1 9 0 11 4M12 8C12 15 6 16 4 11" fill="none" stroke="#e8d020" stroke-width="1.6"/><path d="M10 4 16 1 14 6ZM0 10 6 9 3 14Z" fill="#f04818"/></symbol>
        <symbol id="i-tick" viewBox="0 0 16 16"><path d="M2 8 6 12 14 3" fill="none" stroke="#10a020" stroke-width="4"/><path d="M3 8 6 11 13 4" fill="none" stroke="#40d840" stroke-width="1.5"/></symbol>
        <symbol id="i-target" viewBox="0 0 24 24"><circle cx="12" cy="12" r="6" fill="none" stroke="#e81818" stroke-width="1.7"/><path d="M12 1V23M1 12H23" stroke="#6b2010" stroke-width="1.5"/></symbol>
    </svg>

    <header class="titlebar">
        <span class="file-name">1801.prt （修改的） ]</span>
        <span class="brand">SIEMENS</span>
    </header>

    <nav class="menubar">
        <a href="#">视图<span class="key">(<u>V</u>)</span></a>
        <a href="#">插入<span class="key">(<u>S</u>)</span></a>
        <a href="#">格式<span class="key">(<u>R</u>)</span></a>
        <a href="#">工具<span class="key">(<u>T</u>)</span></a>
        <a href="#">装配<span class="key">(<u>A</u>)</span></a>
        <a href="#">信息<span class="key">(<u>I</u>)</span></a>
        <a href="#">分析<span class="key">(<u>L</u>)</span></a>
        <a href="#">首选项<span class="key">(<u>P</u>)</span></a>
        <a href="#">应用<span class="key">(<u>N</u>)</span></a>
        <a href="#">窗口<span class="key">(<u>O</u>)</span></a>
        <a href="#"><span class="key">GC</span>工具箱</a>
        <a href="#">电极<span class="key">(<u>D</u>)</span></a>
        <a href="#">帮助<span class="key">(<u>H</u>)</span></a>
        <a href="#"><span class="key">HB_MOULD <u>M</u>6.6</span></a>
        <a href="#"><span class="key"><u>Y</u>SUG</span></a>
    </nav>

    <div class="toolbars">
        <div class="toolbar-row row-surface">
            <div class="toolbar">
                <button class="tool" aria-label="草图"><svg><use href="#i-sketch"/></svg></button>
                <button class="tool" aria-label="曲面"><svg><use href="#i-arch"/></svg></button>
                <button class="tool" aria-label="曲线网格"><svg><use href="#i-mesh"/></svg></button>
                <button class="tool" aria-label="扫掠"><svg><use href="#i-cross"/></svg></button>
                <button class="tool" aria-label="片体"><svg><use href="#i-dotsheet"/></svg></button>
                <button class="more" aria-label="更多"></button>
            </div>
            <div class="toolbar">
                <span class="grip"></span>
                <button class="tool" aria-label="加厚"><svg><use href="#i-thicken"/></svg></button>
                <span class="sep"></span>
                <button class="tool" aria-label="偏置曲面"><svg><use href="#i-strips"/></svg></button>
                <button class="tool" aria-label="扩大"><svg><use href="#i-sheet"/></svg></button>
                <button class="tool" aria-label="等参数"><svg><use href="#i-band"/></svg></button>
                <button class="tool" aria-label="编辑曲面"><svg><use href="#i-surfedit"/></svg></button>
                <button class="tool" aria-label="变换片体"><svg><use href="#i-waves"/></svg></button>
                <span class="sep"></span>
                <button class="tool" aria-label="整体突变"><svg><use href="#i-rainbow"/></svg></button>
                <span class="sep"></span>
                <button class="tool" aria-label="法向反向"><svg><use href="#i-flag"/></svg></button>
                <button class="more" aria-label="更多"></button>
            </div>
            <div class="toolbar">
                <span class="grip"></span>
                <button class="tool" aria-label="移动面"><svg><use href="#i-s-move"/></svg></button>
                <button class="tool" aria-label="拉出面"><svg><use href="#i-s-pull"/></svg></button>
                <button class="tool" aria-label="偏置区域"><svg><use href="#i-s-offset"/></svg></button>
                <button class="tool" aria-label="调整面大小"><svg><use href="#i-s-cyl"/></svg></button>
                <button class="tool" aria-label="替换面"><svg><use href="#i-s-swap"/></svg></button>
                <button class="tool" aria-label="调整圆角"><svg><use href="#i-s-blend"/></svg></button>
                <button class="drop" aria-label="展开"></button>
                <button class="tool" aria-label="删除面"><svg><use href="#i-s-delete"/></svg></button>
                <button class="tool" aria-label="复制面"><svg><use href="#i-s-copy"/></svg></button>
                <button class="drop" aria-label="展开"></button>
                <button class="tool" aria-label="阵列面"><svg><use href="#i-s-pattern"/></svg></button>
                <button class="drop" aria-label="展开"></button>
                <button class="tool" aria-label="线性尺寸"><svg><use href="#i-s-dim"/></svg></button>
                <button class="drop" aria-label="展开"></button>
                <button class="tool" aria-label="组合面"><svg><use href="#i-s-group"/></svg></button>
                <button class="tool" aria-label="优化面"><svg><use href="#i-s-wand"/></svg></button>
                <button class="drop" aria-label="展开"></button>
                <button class="more" aria-label="更多"></button>
            </div>
        </div>

        <div class="toolbar-row row-feature">
            <div class="toolbar">
                <button class="tool" aria-label="孔"><svg><use href="#i-hole"/></svg></button>
                <span class="sep"></span>
                <button class="tool" aria-label="拉伸"><svg><use href="#i-extrude"/></svg></button>
                <button class="tool" aria-label="阵列特征"><svg><use href="#i-holes"/></svg></button>
                <button class="tool" aria-label="求和"><svg><use href="#i-unite"/></svg></button>
                <button class="drop" aria-label="展开"></button>
                <button class="tool" aria-label="镜像"><svg><use href="#i-mirror"/></svg></button>
                <button class="tool" aria-label="拆分体"><svg><use href="#i-split"/></svg></button>
                <button class="tool" aria-label="修剪体"><svg><use href="#i-trim"/></svg></button>
                <button class="tool" aria-label="修剪与延伸"><svg><use href="#i-boot"/></svg></button>
                <button class="tool" aria-label="分割面"><svg><use href="#i-slab"/></svg></button>
                <button class="tool" aria-label="抽壳"><svg><use href="#i-shell"/></svg></button>
                <button class="tool" aria-label="偏置面"><svg><use href="#i-bend"/></svg></button>
                <button class="tool" aria-label="缝合"><svg><use href="#i-fold"/></svg></button>
                <button class="tool" aria-label="包裹"><svg><use href="#i-dome"/></svg></button>
                <span class="sep"></span>
                <button class="tool" aria-label="边倒圆"><svg><use href="#i-blend"/></svg></button>
                <button class="tool" aria-label="面倒圆"><svg><use href="#i-chute"/></svg></button>
                <button class="tool" aria-label="倒斜角"><svg><use href="#i-chamfer"/></svg></button>
                <button class="tool" aria-label="拔模"><svg><use href="#i-draft"/></svg></button>
                <button class="more" aria-label="更多"></button>
            </div>
            <div class="toolbar">
                <span class="grip"></span>
                <button class="tool" aria-label="移除参数"><svg><use href="#i-cubes-x"/></svg></button>
                <span class="sep"></span>
                <button class="tool" aria-label="表达式"><svg><use href="#i-measure-x"/></svg></button>
                <button class="more" aria-label="更多"></button>
            </div>
            <div class="toolbar">
                <span class="grip"></span>
                <button class="tool" aria-label="查找组件"><svg><use href="#i-find"/></svg></button>
                <button class="drop" aria-label="展开"></button>
                <button class="tool" aria-label="添加组件"><svg><use href="#i-addcomp"/></svg></button>
                <button class="drop" aria-label="展开"></button>
                <button class="tool" aria-label="移动组件"><svg><use href="#i-movecomp"/></svg></button>
                <button class="drop" aria-label="展开"></button>
                <button class="tool" aria-label="爆炸图"><svg><use href="#i-movecomp"/></svg></button>
                <span class="sep"></span>
                <button class="tool" aria-label="装配序列"><svg><use href="#i-three"/></svg></button>
                <span class="sep"></span>
                <button class="tool" aria-label="部件间链接"><svg><use href="#i-chain"/></svg></button>
                <button class="more more-hidden" aria-label="更多">»</button>
            </div>
            <div class="toolbar">
                <span class="grip"></span>
                <button class="tool" aria-label="适合窗口"><svg><use href="#i-fit"/></svg></button>
                <button class="tool" aria-label="带边着色"><svg><use href="#i-shade-edge"/></svg></button>
                <button class="tool" aria-label="着色"><svg><use href="#i-shade"/></svg></button>
                <button class="tool" aria-label="线框"><svg><use href="#i-wire"/></svg></button>
            </div>
        </div>

        <div class="toolbar-row row-curve">
            <div class="toolbar">
                <button class="tool" aria-label="偏置曲线"><svg><use href="#i-clover"/></svg></button>
                <button class="tool" aria-label="面上偏置"><svg><use href="#i-projsurf"/></svg></button>
                <button class="tool" aria-label="桥接曲线"><svg><use href="#i-bridge"/></svg></button>
                <button class="tool" aria-label="简化曲线"><svg><use href="#i-offcurve"/></svg></button>
                <button class="tool" aria-label="投影曲线"><svg><use href="#i-project"/></svg></button>
                <button class="tool" aria-label="相交曲线"><svg><use href="#i-intersect"/></svg></button>
                <button class="tool" aria-label="截面曲线"><svg><use href="#i-section"/></svg></button>
                <button class="tool" aria-label="缠绕曲线"><svg><use href="#i-wrap"/></svg></button>
                <button class="more" aria-label="更多"></button>
            </div>
            <div class="toolbar">
                <span class="grip"></span>
                <button class="tool" aria-label="编辑曲线参数"><svg><use href="#i-editparam"/></svg></button>
                <button class="tool" aria-label="修剪曲线"><svg><use href="#i-trimcurve"/></svg></button>
                <button class="tool" aria-label="修剪拐角"><svg><use href="#i-corner"/></svg></button>
                <button class="tool" aria-label="分割曲线"><svg><use href="#i-divide"/></svg></button>
                <button class="tool" aria-label="编辑圆角"><svg><use href="#i-fillet"/></svg></button>
                <button class="tool" aria-label="拉长曲线"><svg><use href="#i-stretch"/></svg></button>
                <button class="tool" aria-label="曲线长度"><svg><use href="#i-arclen"/></svg></button>
                <button class="tool" aria-label="光顺样条"><svg><use href="#i-smooth"/></svg></button>
                <button class="more" aria-label="更多"></button>
            </div>
            <div class="toolbar">
                <span class="grip"></span>
                <button class="tool" aria-label="图层设置"><svg><use href="#i-layers"/></svg></button>
                <button class="tool" aria-label="坐标系"><svg><use href="#i-wcs"/></svg></button>
                <button class="drop" aria-label="展开"></button>
                <span class="sep"></span>
                <button class="tool" aria-label="对象显示"><svg><use href="#i-person"/></svg></button>
                <button class="tool" aria-label="显示和隐藏"><svg><use href="#i-play"/></svg></button>
                <button class="drop" aria-label="展开"></button>
                <button class="tool" aria-label="移动对象"><svg><use href="#i-explode"/></svg></button>
                <span class="sep"></span>
                <button class="tool" aria-label="测量距离"><svg><use href="#i-ruler"/></svg></button>
                <button class="tool" aria-label="测量角度"><svg><use href="#i-angle"/></svg></button>
                <button class="more" aria-label="更多"></button>
            </div>
            <div class="toolbar">
                <span class="grip"></span>
                <button class="tool" aria-label="检查几何体"><svg><use href="#i-check-surf"/></svg></button>
                <button class="tool" aria-label="曲率梳"><svg><use href="#i-comb"/></svg></button>
                <span class="sep"></span>
                <button class="tool" aria-label="面分析"><svg><use href="#i-heat"/></svg></button>
                <span class="sep"></span>
                <button class="tool" aria-label="成形"><svg><use href="#i-press"/></svg></button>
                <button class="more" aria-label="更多"></button>
            </div>
        </div>

        <div class="toolbar-row row-mould">
            <div class="toolbar">
                <button class="drop" aria-label="展开"></button>
                <button class="tool" aria-label="基准平面"><svg><use href="#i-plane"/></svg></button>
                <button class="drop" aria-label="展开"></button>
                <button class="tool" aria-label="包容块"><svg><use href="#i-boxwire"/></svg></button>
                <button class="tool" aria-label="尺寸"><svg><use href="#i-graydim"/></svg></button>
                <span class="sep"></span>
                <button class="tool" aria-label="后退"><svg><use href="#i-left"/></svg></button>
                <button class="tool" aria-label="前进"><svg><use href="#i-right"/></svg></button>
                <button class="tool" aria-label="实体"><svg><use href="#i-red"/></svg></button>
                <button class="drop" aria-label="展开"></button>
                <button class="tool" aria-label="拆分"><svg><use href="#i-bluecut"/></svg></button>
                <button class="drop" aria-label="展开"></button>
                <button class="tool" aria-label="模架"><svg><use href="#i-tank"/></svg></button>
                <button class="tool" aria-label="浇口"><svg><use href="#i-funnel"/></svg></button>
                <button class="tool" aria-label="螺钉"><svg><use href="#i-text"/></svg></button>
                <button class="drop" aria-label="展开"></button>
                <button class="tool" aria-label="布局"><svg><use href="#i-quad"/></svg></button>
                <button class="drop" aria-label="展开"></button>
                <button class="tool" aria-label="电极"><svg><use href="#i-lipstick"/></svg></button>
                <button class="drop" aria-label="展开"></button>
                <button class="tool" aria-label="表格"><svg><use href="#i-grid"/></svg></button>
                <button class="drop" aria-label="展开"></button>
                <button class="tool" aria-label="镶件"><svg><use href="#i-pocket"/></svg></button>
                <button class="drop" aria-label="展开"></button>
                <span class="sep"></span>
                <button class="tool" aria-label="加工"><svg><use href="#i-drill"/></svg></button>
                <span class="sep"></span>
                <button class="tool" aria-label="向导"><svg><use href="#i-magic"/></svg></button>
                <button class="tool" aria-label="刀具"><svg><use href="#i-plug"/></svg></button>
                <button class="tool" aria-label="程序"><svg><use href="#i-script"/></svg></button>
                <button class="tool" aria-label="结构树"><svg><use href="#i-tree"/></svg></button>
                <button class="tool" aria-label="圆"><svg><use href="#i-circle"/></svg></button>
                <button class="tool" aria-label="槽"><svg><use href="#i-hatch"/></svg></button>
                <button class="tool" aria-label="熊猫"><svg><use href="#i-panda"/></svg></button>
                <button class="tool" aria-label="截图"><svg><use href="#i-snip"/></svg></button>
                <span class="sep"></span>
                <button class="tool" aria-label="YSUG"><svg><use href="#i-ysug"/></svg></button>
                <button class="drop" aria-label="展开"></button>
                <button class="more" aria-label="更多"></button>
            </div>
        </div>
    </div>

    <div class="selection-bar">
        <select class="scope" aria-label="选择范围">
            <option>在工作部件内部</option>
        </select>
        <button class="snap" aria-label="部件间"><svg><use href="#i-gears"/></svg></button>
        <span class="sep"></span>
        <button class="snap" aria-label="选择过滤器"><svg><use href="#i-selfilter"/></svg></button>
        <button class="drop drop-narrow" aria-label="展开"></button>
        <button class="snap" aria-label="返回"><svg><use href="#i-return"/></svg></button>
        <button class="snap" aria-label="选择体"><svg><use href="#i-cubesel"/></svg></button>
        <button class="snap" aria-label="撤消选择"><svg><use href="#i-undo"/></svg></button>
        <button class="snap" aria-label="工具"><svg><use href="#i-hammer"/></svg></button>
        <span class="sep"></span>
        <button class="snap" aria-label="矩形选择"><svg><use href="#i-rect"/></svg></button>
        <button class="drop" aria-label="展开"></button>
        <span class="sep"></span>
        <button class="snap" aria-label="启用捕捉点"><svg><use href="#i-snap"/></svg></button>
        <button class="snap" aria-label="端点"><svg><use href="#i-p-line"/></svg></button>
        <button class="snap" aria-label="中点"><svg><use href="#i-p-mid"/></svg></button>
        <button class="snap" aria-label="控制点"><svg><use href="#i-p-curve"/></svg></button>
        <button class="snap" aria-label="交点"><svg><use href="#i-p-cross"/></svg></button>
        <button class="snap" aria-label="圆心"><svg><use href="#i-p-center"/></svg></button>
        <button class="snap" aria-label="象限点"><svg><use href="#i-p-quad"/></svg></button>
        <button class="snap" aria-label="现有点"><svg><use href="#i-p-point"/></svg></button>
        <button class="snap" aria-label="曲线上的点"><svg><use href="#i-p-on"/></svg></button>
        <button class="snap" aria-label="面上的点"><svg><use href="#i-p-face"/></svg></button>
        <span class="sep"></span>
        <button class="snap active" aria-label="小平面"><svg><use href="#i-p-cube"/></svg></button>
    </div>

    <div class="status-bar">
        <span class="prompt">曲线或点</span>
        <span class="status"><span class="digits">12 </span>个对象<span class="digits"> </span>已选定</span>
        <span class="status-cell"></span>
        <span class="status-end"></span>
    </div>

    <main class="workspace">
        <section class="viewport">
            <svg class="model" viewBox="0 218 810 643" preserveAspectRatio="xMinYMin meet" role="img" aria-label="气缸装配">
                <defs>
                    <linearGradient id="metal"><stop offset="0" stop-color="#f5a84c"/><stop offset=".15" stop-color="#ffcb5c"/><stop offset=".35" stop-color="#ffee82"/><stop offset=".55" stop-color="#fba54d"/><stop offset=".8" stop-color="#b87332"/><stop offset="1" stop-color="#643a12"/></linearGradient>
                    <linearGradient id="rod" href="#metal" gradientUnits="userSpaceOnUse" x1="180" y1="588" x2="189" y2="619"/>
                    <linearGradient id="tie-top" href="#metal" gradientUnits="userSpaceOnUse" x1="460" y1="459" x2="464" y2="472"/>
                    <linearGradient id="tie-mid" href="#metal" gradientUnits="userSpaceOnUse" x1="500" y1="487" x2="504" y2="499"/>
                    <linearGradient id="tie-low" href="#metal" gradientUnits="userSpaceOnUse" x1="500" y1="540" x2="504" y2="553"/>
                    <linearGradient id="barrel" gradientUnits="userSpaceOnUse" x1="480" y1="475" x2="496" y2="532"><stop offset="0" stop-color="#f6ae4c"/><stop offset=".25" stop-color="#ffd565"/><stop offset=".5" stop-color="#ffa850"/><stop offset=".75" stop-color="#bb7634"/><stop offset="1" stop-color="#643a12"/></linearGradient>
                </defs>

                <!-- rear cap -->
                <path d="M543 420 573 409 630 443 598 455Z" fill="#ffd060"/>
                <path d="M543 420 598 455 593 535 539 498Z" fill="#a86c30"/>
                <path d="M598 455 630 443 627 523 593 535Z" fill="#b87834"/>

                <!-- barrel and tie rods -->
                <path d="M372 487 548 430 553 443 380 498Z" fill="url(#tie-top)"/>
                <path d="M394 505 552 452C566 446 578 454 583 461L592 500 408 559Z" fill="url(#barrel)"/>
                <path d="M406 518 588 456 592 469 406 529Z" fill="url(#tie-mid)"/>
                <path d="M408 530 540 486" stroke="#54300e"/>
                <path d="M406 570 583 512 588 525 408 583Z" fill="url(#tie-low)"/>

                <g class="edge">
                    <path d="M543 420 573 409 630 443 627 523 593 535 539 498ZM543 420 598 455 630 443M598 455 593 535M573 409 571 487 539 498M571 487 627 523"/>
                    <ellipse cx="551" cy="436" rx="5" ry="7"/>
                    <ellipse cx="588" cy="463" rx="5" ry="8"/>
                    <ellipse cx="585" cy="518" rx="5" ry="7"/>
                    <path d="M552 471C553 445 570 445 578 458 584 469 585 493 582 500 576 509 561 503 556 491 552 483 552 477 552 471Z"/>
                    <ellipse cx="546" cy="489" rx="4" ry="6"/>
                </g>
                <g class="solid">
                    <path d="M580 407 584 405H592L596 407 594 413C602 417 604 427 601 432 595 441 580 440 576 432 573 425 576 416 582 412Z"/>
                    <ellipse cx="628" cy="450" rx="13" ry="14"/>
                    <ellipse cx="625" cy="505" rx="12" ry="13"/>
                    <ellipse cx="585" cy="480" rx="12" ry="13"/>
                </g>
                <path d="M616 448 619 440M621 457H625M616 507 618 500M577 478 583 476M590 471H592M592 487 594 482M584 407H592" class="speck"/>

                <!-- piston rod -->
                <path d="M124 607 283 553C294 554 299 564 298 579L132 637Z" fill="url(#rod)"/>
                <ellipse cx="124.5" cy="622" rx="8.5" ry="15" class="edge" transform="rotate(-12 124.5 622)"/>
                <g class="edge">
                    <ellipse cx="167" cy="608" rx="9" ry="16" transform="rotate(-12 167 608)"/>
                    <ellipse cx="181" cy="604" rx="11" ry="17" transform="rotate(-12 181 604)"/>
                    <path d="M162 606 180 602M172 619 186 621"/>
                </g>
                <path d="M178 610 188 607 187 619 177 618Z" fill="#b87834"/>

                <!-- front plate, seen through to the rod -->
                <path d="M250 478 283 467 365 522V545L332 533Z" fill="#ffd060"/>
                <path d="M250 478 332 533 365 623V648L331 659 243 601Z" fill="#a86c30"/>
                <path d="M331 637 365 617V648L331 659Z" fill="#b87834"/>
                <path d="M247 567 283 554C295 553 299 565 296 581L247 599Z" fill="url(#rod)"/>

                <!-- front head -->
                <path d="M298 501 355 481 410 518 338 535Z" fill="#ffd060"/>
                <path d="M298 501 338 535V625L296 603Z" fill="#a86c30"/>
                <path d="M338 535 410 518 406 598 397 611 340 628Z" fill="#b87834"/>
                <path d="M325 576 352 560 397 579 394 595 344 606Z" fill="#a56628"/>
                <path d="M340 588 378 579 396 592 357 607Z" fill="#ffd060"/>

                <g class="edge">
                    <path d="M250 478 283 467 338 502M250 478 243 601 331 659 365 648V614M331 659 332 628M250 478 338 535M283 467 279 580M279 580 365 648M243 601 296 584"/>
                    <path d="M298 501 355 481 410 518 406 598 340 628 296 603ZM298 501 338 535 410 518M338 535V626M355 481 351 563 406 598M351 563 297 583M364 524 365 590"/>
                    <path d="M340 602 397 590 396 611 343 628ZM351 563 394 590M365 590 357 627M377 589V621"/>
                    <ellipse cx="385" cy="538" rx="13" ry="28" transform="rotate(-8 385 538)"/>
                    <path d="M364 531C363 517 369 510 379 511 388 511 395 522 397 530"/>
                    <ellipse cx="307" cy="517" rx="4" ry="6"/>
                    <ellipse cx="345" cy="542" rx="5" ry="7"/>
                    <ellipse cx="358" cy="555" rx="5" ry="7"/>
                    <ellipse cx="397" cy="579" rx="5" ry="7"/>
                    <ellipse cx="401" cy="524" rx="5" ry="6"/>
                    <path d="M295 552V596M313 560 314 596"/>
                </g>
                <g class="solid">
                    <path d="M357 479 362 478H367L372 480 369 484V490C376 495 377 502 374 506 368 511 356 511 352 504 350 498 353 492 359 489V484Z"/>
                    <path d="M261 520 266 512 280 508 294 512 299 522 297 534 287 540 274 537 263 529Z"/>
                    <path d="M300 548 304 540 315 534 329 537 335 546 333 560 322 566 309 562 301 556Z"/>
                    <path d="M257 575 264 568 278 564 295 568 301 580 294 593 278 598 264 592 258 584Z"/>
                    <path d="M297 600 303 592 315 590 329 596 331 608 325 618 315 624 302 616 297 609Z"/>
                    <path d="M340 578 347 573 363 575 376 585 384 588 380 598 366 604 362 614 345 612 341 600 332 592Z"/>
                </g>
                <path d="M264 528 270 524 267 534ZM303 551 308 547 306 558ZM301 603 307 600 303 611ZM324 588 334 584 330 591ZM374 579 382 580 377 590Z" fill="#ffd060"/>
                <path d="M264 520 267 516M274 512H278M288 520V527M287 533H290M304 544 307 541M308 540H312M326 546V554M323 560H326M270 575H276M283 570V574M289 582 295 578M277 588H283M294 571 299 574M300 581 304 579M310 597H314M323 603V610M314 614H318M345 604V612M346 618 349 615M355 608H358M368 600H372M385 600 390 597M383 612 390 608M367 616 372 612M301 572 307 575M262 580 265 576M267 591H271" class="speck"/>
                <path d="M338 538 410 520M340 530 405 513M310 574 350 561M302 590 326 582" fill="none" stroke="#ffd68a" stroke-dasharray="4 2"/>

                <!-- work coordinate system -->
                <path d="M235 583 234 572 235 553 238 538 240 552 237 572Z" fill="#0a2cc0"/>
                <path d="M235 583 235 573" stroke="#7090f0" stroke-width="2"/>
                <path d="M200 564 212 567 232 584 209 575Z" fill="#228a2c"/>
                <path d="M217 574 232 584" stroke="#9bdcae" stroke-width="2"/>
                <path d="M238 585 266 574 258 580Z" fill="#e38a90"/>
                <text x="217" y="537" class="axis axis-z">ZC</text>
                <text x="201" y="561" class="axis axis-y">YC</text>
                <text x="262" y="568" class="axis axis-x">XC</text>
            </svg>

            <form class="dialog" role="dialog" aria-labelledby="dialog-title">
                <div class="dialog-title">
                    <h1 id="dialog-title">移除参数</h1>
                    <button type="button" aria-label="重置"><svg viewBox="0 0 16 16"><path d="M4 12C8 14 13 12 13 8 13 5 11 3 8 4" fill="none" stroke="#fff" stroke-width="2.5"/></svg></button>
                    <button type="button" aria-label="最小化"><svg viewBox="0 0 16 16"><path d="M2 7H14" stroke="#fff" stroke-width="2.5"/></svg></button>
                    <button type="button" class="close" aria-label="关闭"><svg viewBox="0 0 16 16"><path d="M3 3 13 13M13 3 3 13" stroke="#fff" stroke-width="2.5"/></svg></button>
                </div>
                <div class="dialog-body">
                    <div class="group-header">
                        <h2>对象</h2>
                        <button type="button" aria-label="折叠"><svg viewBox="0 0 16 16"><path d="M3 12 8 4 13 12" fill="none" stroke="#666" stroke-width="3"/></svg></button>
                    </div>
                    <div class="group-content">
                        <div class="select-step">
                            <svg class="step-tick"><use href="#i-tick"/></svg>
                            <span>选择对象<span class="key"> (12)</span></span>
                        </div>
                        <button type="button" class="pick" aria-label="选择对象"><svg><use href="#i-target"/></svg></button>
                    </div>
                    <div class="dialog-actions">
                        <button type="button" class="ok">确定</button>
                        <button type="button">应用</button>
                        <button type="button">取消</button>
                    </div>
                </div>
            </form>
        </section>

        <aside class="navigator">
            <h2>部件导航器</h2>
            <div class="tree-frame">
                <table class="tree">
                    <thead>
                        <tr><th class="col-name">名称<span class="sort"></span></th><th>附注</th></tr>
                    </thead>
                    <tbody>
                        <tr><td><div class="node first"><span class="branch"></span><svg><use href="#i-clock"/></svg>历史记录模式</div></td><td></td></tr>
                        <tr><td><div class="node"><button class="toggle" aria-label="展开">+</button><svg><use href="#i-modelview"/></svg>模型视图</div></td><td></td></tr>
                        <tr><td><div class="node"><button class="toggle" aria-label="展开">+</button><svg><use href="#i-tick"/></svg><svg><use href="#i-camera"/></svg>摄像机</div></td><td></td></tr>
                        <tr><td><div class="node end"><button class="toggle" aria-label="折叠">−</button><svg><use href="#i-folder"/></svg>模型历史记录</div></td><td></td></tr>
                        <tr><td><label class="node leaf"><input type="checkbox" checked><svg><use href="#i-body"/></svg><span>体<span class="key"> (0)</span></span></label></td><td></td></tr>
                        <tr><td><label class="node leaf"><input type="checkbox" checked><svg><use href="#i-link"/></svg><span>被链接的体<span class="key"> (12)</span></span></label></td><td></td></tr>
                        <tr><td><label class="node leaf"><input type="checkbox" checked><svg><use href="#i-link"/></svg><span>被链接的体<span class="key"> (13)</span></span></label></td><td></td></tr>
                        <tr><td><label class="node leaf"><input type="checkbox" checked><svg><use href="#i-link"/></svg><span>被链接的体<span class="key"> (14)</span></span></label></td><td></td></tr>
                        <tr><td><label class="node leaf"><input type="checkbox" checked><svg><use href="#i-link"/></svg><span>被链接的体<span class="key"> (15)</span></span></label></td><td></td></tr>
                        <tr><td><label class="node leaf"><input type="checkbox" checked><svg><use href="#i-link"/></svg><span>被链接的体<span class="key"> (16)</span></span></label></td><td></td></tr>
                        <tr><td><label class="node leaf"><input type="checkbox" checked><svg><use href="#i-link"/></svg><span>被链接的体<span class="key"> (17)</span></span></label></td><td></td></tr>
                        <tr><td><label class="node leaf"><input type="checkbox" checked><svg><use href="#i-link"/></svg><span>被链接的体<span class="key"> (18)</span></span></label></td><td></td></tr>
                        <tr><td><label class="node leaf"><input type="checkbox" checked><svg><use href="#i-link"/></svg><span>被链接的体<span class="key"> (19)</span></span></label></td><td></td></tr>
                        <tr><td><label class="node leaf"><input type="checkbox" checked><svg><use href="#i-link"/></svg><span>被链接的体<span class="key"> (20)</span></span></label></td><td></td></tr>
                        <tr><td><label class="node leaf"><input type="checkbox" checked><svg><use href="#i-link"/></svg><span>被链接的体<span class="key"> (21)</span></span></label></td><td></td></tr>
                        <tr><td><label class="node leaf last"><input type="checkbox" checked><svg><use href="#i-link"/></svg><span>被链接的体<span class="key"> (22)</span></span></label></td><td></td></tr>
                    </tbody>
                </table>
                <div class="empty-rows"></div>
            </div>
        </aside>
    </main>
</body>
</html>
```
FILE: styles.css
```css
:root {
    --bar: #d9d9d9;
    --line-dark: #a9a9a9;
    --line-light: #f8f8f8;
    --row-line: #e1e1e1;
    --edge: #f5a04a;
}

* {
    box-sizing: border-box;
    margin: 0;
    padding: 0;
}

body {
    display: flex;
    flex-direction: column;
    height: 100vh;
    overflow: hidden;
    background: var(--bar);
    color: #000;
    font-family: "Noto Sans CJK SC", "Liberation Sans", sans-serif;
    font-size: 12px;
    line-height: 16px;
}

button {
    border: none;
    background: none;
    font: inherit;
    color: inherit;
}

a {
    color: inherit;
    text-decoration: none;
}

.sprite {
    width: 0;
    height: 0;
    flex: none;
}

/* Latin text is half the width of a CJK character */
.key {
    font-family: "Liberation Mono", monospace;
    font-size: 10px;
    white-space: pre;
}

/* title and menu */
.titlebar {
    flex: none;
    display: flex;
    justify-content: space-between;
    align-items: flex-end;
    height: 8px;
    padding: 0 14px 0 3px;
    overflow: hidden;
    background: #1b1b1b;
    color: #fff;
    font-weight: bold;
}

.file-name {
    font-family: "Liberation Mono", "Noto Sans CJK SC", monospace;
    white-space: pre;
}

.brand {
    font-family: "Liberation Sans", sans-serif;
    font-size: 14px;
}

.menubar {
    flex: none;
    display: flex;
    align-items: center;
    gap: 13px;
    height: 24px;
    margin-left: -1px;
    overflow: hidden;
    background: linear-gradient(#ececec, #e0e0e0);
    border-bottom: 1px solid #bcbcbc;
    white-space: nowrap;
}

/* toolbars */
.toolbars {
    flex: none;
    background: linear-gradient(#e2e2e2, #cecece);
    border-bottom: 2px solid #a2a2a2;
    overflow: hidden;
}

.toolbar-row {
    display: flex;
    height: 34px;
}

.row-surface {
    margin-left: -9px;
}

.row-feature {
    padding-left: 3px;
}

.row-curve {
    margin-left: -8px;
}

.row-mould {
    padding-left: 8px;
}

.toolbar {
    flex: none;
    display: flex;
    align-items: center;
    border-top: 1px solid var(--line-light);
    border-bottom: 1px solid #b9b9b9;
}

.row-feature .toolbar:last-child {
    flex: 1 0 auto;
}

.tool {
    flex: none;
    display: flex;
    justify-content: center;
    align-items: center;
    width: 31px;
    height: 30px;
}

.tool svg {
    width: 24px;
    height: 24px;
}

.grip {
    width: 8px;
    height: 24px;
    background: repeating-linear-gradient(#f6f6f6 0 2px, #a8a8a8 2px 3px, transparent 3px 4px) 5px 0 / 2px 100% no-repeat;
}

.sep {
    flex: none;
    width: 6px;
    height: 30px;
    background: linear-gradient(90deg, #b4b4b4 50%, #fafafa 50%) 3px 0 / 2px 100% no-repeat;
}

.drop,
.more {
    flex: none;
    display: flex;
    justify-content: center;
    align-items: center;
    width: 12px;
    height: 30px;
}

.drop::after,
.more::after {
    content: "";
    border: 3px solid transparent;
    border-top-color: #000;
    border-bottom: none;
}

.more {
    width: 14px;
    height: 32px;
    align-items: flex-end;
    padding-bottom: 6px;
    border-right: 1px solid var(--line-dark);
}

.more-hidden {
    width: 50px;
    flex-direction: column;
    justify-content: space-between;
    padding-right: 4px;
    font-size: 18px;
    font-weight: bold;
    line-height: 10px;
}

.drop-narrow {
    width: 7px;
}

/* selection bar */
.selection-bar {
    flex: none;
    display: flex;
    align-items: center;
    height: 26px;
    background: linear-gradient(#c4c4c4, #dedede);
    border-bottom: 1px solid #b0b0b0;
    overflow: hidden;
}

.selection-bar .sep {
    height: 24px;
}

.scope {
    width: 102px;
    height: 17px;
    margin: 0 4px 0 -5px;
    padding-left: 0;
    appearance: none;
    border: 1px solid #666;
    border-radius: 3px;
    color: #000;
    font: inherit;
    line-height: 15px;
    background:
        url("data:image/svg+xml,%3Csvg xmlns='http://www.w3.org/2000/svg' viewBox='0 0 15 15'%3E%3Cpath d='M0 0H15V15H0Z' fill='%232464b8'/%3E%3Cpath d='M1 1H14V7H1Z' fill='%2390c4f0'/%3E%3Cpath d='M2 4H13L7.5 11Z' fill='%23000' stroke='%23fff'/%3E%3C/svg%3E") right center / 15px 15px no-repeat,
        #fff;
}

.snap {
    flex: none;
    display: flex;
    justify-content: center;
    align-items: center;
    width: 23px;
    height: 23px;
}

.snap svg {
    width: 18px;
    height: 18px;
}

.snap.active {
    border: 1px solid #555;
    border-radius: 3px;
    background: #fff;
}

/* status */
.status-bar {
    flex: none;
    display: flex;
    height: 22px;
    border-top: 1px solid var(--line-light);
    border-bottom: 2px solid #9a9a9a;
    font-size: 13px;
    font-weight: bold;
    line-height: 19px;
    white-space: pre;
}

.prompt {
    flex: 0 0 42%;
    overflow: hidden;
    text-indent: -7px;
}

.digits {
    font-family: "Liberation Mono", monospace;
    font-size: 12px;
}

.status {
    flex: 1;
    padding-left: 2px;
}

.status,
.status-cell,
.status-end {
    border-left: 1px solid #b0b0b0;
    box-shadow: inset 1px 0 #f8f8f8;
}

.status-cell {
    width: 20px;
}

.status-end {
    width: 13px;
}

/* graphics window */
.workspace {
    flex: 1;
    display: flex;
    min-height: 0;
}

.viewport {
    flex: 1;
    position: relative;
    min-width: 0;
    overflow: hidden;
    background: linear-gradient(#b4b5b7, #dfe0e2 75%, #e3e4e6);
}

.model {
    display: block;
    width: 100%;
    height: 100%;
}

.edge {
    fill: none;
    stroke: var(--edge);
    stroke-width: 3;
}

ellipse.edge {
    fill: #9c652d;
}

.solid {
    fill: var(--edge);
    stroke: var(--edge);
    stroke-width: 2;
}

.speck {
    fill: none;
    stroke: #9a6028;
    stroke-width: 2;
}

.axis {
    font-family: "Liberation Sans", sans-serif;
    font-size: 12px;
}

.axis-z {
    fill: #1450e8;
}

.axis-y {
    fill: #2c9038;
}

.axis-x {
    fill: #c83030;
}

/* dialog */
.dialog {
    position: absolute;
    left: 161px;
    top: 49px;
    width: 290px;
    border: 1px solid #111;
    border-bottom-width: 7px;
    border-radius: 5px;
    background: #efefef;
    overflow: hidden;
}

.dialog-title {
    display: flex;
    align-items: center;
    gap: 3px;
    height: 23px;
    padding: 0 3px 0 8px;
    background: linear-gradient(#666, #484848 35%, #171717 45%, #1c1c1c);
    color: #fff;
}

.dialog-title h1 {
    flex: 1;
    font-size: 13px;
}

.dialog-title button {
    width: 20px;
    height: 18px;
    border: 1px solid #777;
    border-radius: 3px;
    background: linear-gradient(#686868, #333);
}

.dialog-title .close {
    border-color: #f4a090;
    background: linear-gradient(#f49080, #dc3a1c);
}

.dialog-title svg {
    display: block;
    width: 14px;
    height: 14px;
    margin: 0 auto;
}

.dialog-body {
    padding: 5px 6px 6px;
}

.group-header {
    display: flex;
    height: 22px;
    border-bottom: 1px solid #777;
    background: linear-gradient(#fff, #f4f4f4 50%, #dedede 55%, #dcdcdc);
}

.group-header h2 {
    flex: 1;
    padding-left: 6px;
    font-size: 13px;
    line-height: 20px;
}

.group-header button {
    width: 23px;
    border-left: 1px solid #aaa;
}

.group-header svg {
    display: block;
    width: 14px;
    height: 14px;
    margin: 0 auto;
}

.group-content {
    display: flex;
    align-items: flex-start;
    height: 47px;
    padding: 6px 9px 0 7px;
    border: 1px solid #aaa;
    border-top: none;
    background: #d2d2d2;
}

.select-step {
    flex: 1;
    display: flex;
    align-items: center;
    gap: 4px;
    height: 31px;
    padding-left: 2px;
    border-radius: 6px 0 0 6px;
    background: linear-gradient(90deg, #e3a463, #e0ab74 40%, #d2d2d2);
}

.step-tick {
    width: 13px;
    height: 13px;
}

.pick {
    width: 30px;
    height: 30px;
    padding: 1px;
    border: 1px solid #704020;
    border-radius: 3px;
    outline: 1px dotted #222;
    outline-offset: -3px;
    background: linear-gradient(#fbd0b0, #f9a468);
}

.pick svg {
    display: block;
    width: 22px;
    height: 22px;
    margin: 0 auto;
}

.dialog-actions {
    display: flex;
    justify-content: flex-end;
    gap: 7px;
    margin-top: 3px;
    padding: 5px 10px 0 0;
    border-top: 1px solid #aaa;
    box-shadow: inset 0 1px #fff;
}

.dialog-actions button {
    width: 52px;
    height: 19px;
    border: 2px solid #808080;
    border-radius: 4px;
    background: linear-gradient(#fff, #f2f2f2 45%, #d8d8d8 50%, #eee);
    line-height: 15px;
}

.dialog-actions .ok {
    border-color: #3f7a3c;
    background: linear-gradient(#d4f4cc, #b4eaa4 45%, #84d870 50%, #b4f49c);
}

/* part navigator */
.navigator {
    flex: 0 0 265px;
    display: flex;
    flex-direction: column;
    padding-left: 9px;
    border-left: 1px solid #fff;
    background: #ebebeb;
}

.navigator h2 {
    padding: 11px 5px 8px;
    font-size: 13px;
    line-height: 16px;
}

.tree-frame {
    flex: 1;
    display: flex;
    flex-direction: column;
    min-height: 0;
    overflow: hidden;
    border-top: 1px solid #555;
    border-left: 1px solid #555;
    background: #fff;
}

.tree {
    width: 100%;
    border-collapse: collapse;
    table-layout: fixed;
}

.tree th {
    height: 17px;
    padding-left: 6px;
    border-bottom: 1px solid #888;
    background: linear-gradient(#f6f6f6, #d8d8d8);
    font-weight: normal;
    text-align: left;
    line-height: 15px;
}

.tree th + th {
    border-left: 1px solid #888;
}

.col-name {
    width: 200px;
}

.sort {
    display: inline-block;
    margin-left: 15px;
    vertical-align: 1px;
    border: 6px solid transparent;
    border-top: none;
    border-bottom-color: #222;
}

.tree td {
    height: 20px;
    border-bottom: 1px solid var(--row-line);
    color: #222;
    white-space: nowrap;
}

.tree td + td {
    border-left: 1px solid var(--row-line);
}

.tree tbody tr:nth-child(even) {
    background: #f5f5f5;
}

.node {
    display: flex;
    align-items: center;
    height: 19px;
    padding-left: 5px;
    background:
        repeating-linear-gradient(90deg, #999 0 1px, transparent 1px 2px) 9px 9px / 10px 1px no-repeat,
        repeating-linear-gradient(#999 0 1px, transparent 1px 2px) 9px 0 / 1px 100% no-repeat;
}

.node.end {
    background-size: 10px 1px, 1px 9px;
}

.node svg {
    width: 16px;
    height: 16px;
    margin-right: 3px;
}

.node svg + svg {
    margin-left: -3px;
}

.node.first {
    background: none;
}

.branch {
    width: 10px;
    height: 10px;
    margin: 9px 1px 0 4px;
    border-top: 1px dotted #888;
    border-left: 1px dotted #888;
}

.toggle {
    width: 9px;
    height: 9px;
    margin-right: 6px;
    border: 1px solid #888;
    border-radius: 2px;
    background: #fff;
    font-family: "Liberation Sans", sans-serif;
    font-size: 10px;
    line-height: 7px;
}

.leaf {
    margin-left: 30px;
    padding-left: 0;
    background-position: 0 9px, 0 0;
}

.leaf.last {
    background-size: 9px 1px, 1px 10px;
}

.leaf svg {
    margin-right: 2px;
}

.leaf input {
    width: 12px;
    height: 12px;
    margin: 0 2px 0 11px;
    appearance: none;
    border: 1px solid #000;
    background: #fff url("data:image/svg+xml,%3Csvg xmlns='http://www.w3.org/2000/svg' viewBox='0 0 10 10'%3E%3Cpath d='M1 5 4 8 9 2' fill='none' stroke='%2312b824' stroke-width='2.5'/%3E%3C/svg%3E") center / 10px 10px no-repeat;
}

.empty-rows {
    flex: 1;
    background:
        linear-gradient(var(--row-line), var(--row-line)) 200px 0 / 1px 100% no-repeat,
        repeating-linear-gradient(#fff 0 19px, var(--row-line) 19px 20px, #f5f5f5 20px 39px, var(--row-line) 39px 40px);
}
```
